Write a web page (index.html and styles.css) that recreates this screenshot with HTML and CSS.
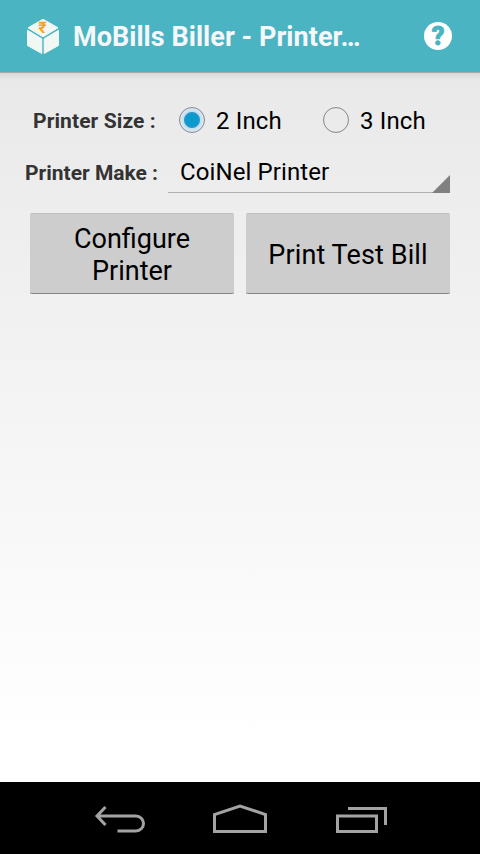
FILE: index.html
```
<!DOCTYPE html>
<html lang="en">
<head>
    <meta charset="UTF-8">
    <meta name="viewport" content="width=device-width, initial-scale=1.0">
    <title>MoBills Biller - Printer Settings</title>
    <link rel="stylesheet" href="styles.css">
</head>
<body>
    <header class="action-bar">
        <svg class="logo" width="34" height="38" viewBox="0 0 34 38">
            <path class="logo-face" d="M17 1.2 L32 9.8 L17 18.9 L2 9.8 Z"/>
            <path class="logo-face" d="M1.5 12.3 L15.8 20.8 V35.5 L1.5 27.5 Z"/>
            <path class="logo-face" d="M32.5 12.3 L18.2 20.8 V35.5 L32.5 27.5 Z"/>
            <text class="logo-rupee" x="16.5" y="14.5" text-anchor="middle">₹</text>
        </svg>
        <h1 class="title">MoBills Biller - Printer…</h1>
        <svg class="help" width="28" height="28" viewBox="0 0 28 28">
            <circle cx="14" cy="14" r="14" fill="#fff"/>
            <text class="help-mark" x="14" y="23" text-anchor="middle">?</text>
        </svg>
    </header>

    <main class="settings">
        <form>
            <div class="row size-row">
                <span class="label label-size">Printer Size :</span>
                <label class="option">
                    <span class="radio checked"></span>
                    <span class="option-text">2 Inch</span>
                </label>
                <label class="option">
                    <span class="radio"></span>
                    <span class="option-text">3 Inch</span>
                </label>
            </div>

            <div class="row make-row">
                <span class="label label-make">Printer Make :</span>
                <div class="spinner">
                    <span class="spinner-text">CoiNel Printer</span>
                    <svg class="spinner-arrow" width="18" height="18" viewBox="0 0 18 18">
                        <path d="M18 0 V18 H0 Z" fill="#808080"/>
                    </svg>
                </div>
            </div>

            <div class="buttons">
                <button type="button">Configure Printer</button>
                <button type="button" class="test-bill">Print Test Bill</button>
            </div>
        </form>
    </main>

    <nav class="nav-bar">
        <svg width="52" height="30" viewBox="0 0 52 30">
            <path d="M12.5 3 L4 12 L12.5 21 M4 12 H43 A7.5 7.5 0 0 1 43 27 H24.5"/>
        </svg>
        <svg width="56" height="30" viewBox="0 0 56 30">
            <path d="M2.5 27.5 V10.5 L28 2 L53.5 10.5 V27.5 Z"/>
        </svg>
        <svg width="52" height="30" viewBox="0 0 52 30">
            <path d="M2.5 12 H41.5 V27.5 H2.5 Z M13 4.5 H50.5 V21"/>
        </svg>
    </nav>
</body>
</html>
```
FILE: styles.css
```
* {
    box-sizing: border-box;
}
body {
    margin: 0;
    height: 854px;
    display: flex;
    flex-direction: column;
    font-family: Roboto, "Noto Sans", sans-serif;
    color: #000;
    background: #000;
    overflow: hidden;
}
.action-bar {
    display: flex;
    align-items: center;
    height: 72px;
    padding: 0 28px 0 26px;
    background: #4ab4c2;
}
.logo {
    margin-top: 2px;
}
.logo-face {
    fill: #f1f8f3;
    stroke: #f1f8f3;
    stroke-width: 1;
    stroke-linejoin: round;
}
.logo-rupee {
    font-size: 16px;
    font-weight: bold;
    fill: #f5a02c;
}
.title {
    flex: 1;
    margin: 2px 0 0 13px;
    font-size: 27px;
    font-weight: bold;
    line-height: 32px;
    letter-spacing: 0.04px;
    white-space: nowrap;
    color: #f5f7fa;
}
.help-mark {
    font-size: 25px;
    font-weight: 900;
    fill: #4ab4c2;
    stroke: #4ab4c2;
    stroke-width: 0.8;
}
.settings {
    height: 710px;
    padding: 23px 30px 0 25px;
    border-top: 1px solid #a9a9ab;
    background: linear-gradient(#dadada, rgba(232, 232, 232, 0) 7px),
        linear-gradient(#e9e9e9, #fff 94%);
}
.row {
    display: flex;
    align-items: center;
}
.size-row {
    height: 48px;
}
.label {
    flex: none;
    font-size: 21px;
    font-weight: bold;
    color: #333;
    white-space: nowrap;
}
.label-size {
    width: 154px;
    padding: 2px 0 0 8px;
    letter-spacing: 0.1px;
}
.label-make {
    width: 143px;
    padding-top: 7px;
}
.option {
    display: flex;
    flex: none;
    align-items: center;
    width: 144px;
    font-size: 24px;
    letter-spacing: 0.15px;
    white-space: nowrap;
}
.option-text {
    padding-top: 2px;
}
.radio {
    flex: none;
    width: 26px;
    height: 26px;
    margin-right: 11px;
    border: 1px solid #858585;
    border-radius: 50%;
}
.checked {
    border-color: #858594;
    background: radial-gradient(circle, #0c9ace 6px, #2c98c8 7.5px, #c3dfec 8.5px, #dcebf5 12px);
}
.make-row {
    height: 48px;
    margin-top: 1px;
}
.spinner {
    position: relative;
    flex: 1;
    height: 48px;
    padding: 13px 0 0 12px;
    border-bottom: 1px solid #b0b0b0;
    font-size: 24px;
    line-height: 28px;
    letter-spacing: 0.1px;
}
.spinner-arrow {
    position: absolute;
    right: 0;
    bottom: -1px;
}
.buttons {
    display: flex;
    gap: 12px;
    margin: 20px 0 0 5px;
}
button {
    width: 204px;
    height: 81px;
    padding: 2px 30px 0;
    border: 0;
    border-top: 1px solid #bfbfbf;
    border-bottom: 1px solid #858585;
    border-radius: 2px;
    background: #cdcdcd;
    font-family: inherit;
    font-size: 27px;
    line-height: 32px;
    color: #000;
}
.test-bill {
    padding: 2px 0 0;
    letter-spacing: 0.1px;
    white-space: nowrap;
}
.nav-bar {
    display: flex;
    align-items: center;
    justify-content: space-between;
    height: 72px;
    padding: 2px 93px 0 93px;
    background: #000;
}
.nav-bar path {
    fill: none;
    stroke: #a3a3a3;
    stroke-width: 3;
}
```
